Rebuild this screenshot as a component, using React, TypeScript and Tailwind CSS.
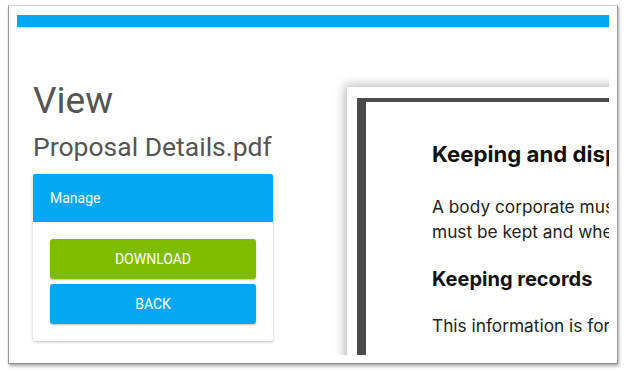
export default function App() {
  return (
    <div className="w-[626px] h-[375px] bg-white overflow-hidden">
      {/* screenshot frame */}
      <div className="ml-[8px] mt-[5px] w-[610px] h-[359px] bg-white border border-[#d6d6d6] border-l-[#9a9a9a] border-r-[#9a9a9a] border-b-[#8f8f8f] shadow-[1px_2px_3px_rgba(0,0,0,0.35)] pl-[8px] pr-[7px] pt-[9px] pb-[7px]">
        <div className="w-[592px] h-[340px] overflow-hidden flex flex-col">
          <div className="h-[12px] shrink-0 bg-[#06a7f2] shadow-[0_1px_2px_rgba(0,0,0,0.2)]" />

          <div className="flex items-start">
            {/* left column */}
            <div className="w-[240px] shrink-0 ml-[16px] pt-[52px] font-['Roboto',sans-serif]">
              <h1 className="text-[37px] leading-[43px] text-[#555555] font-normal">View</h1>
              <div className="mt-[9px] text-[26.5px] leading-[31px] text-[#555555]">Proposal Details.pdf</div>

              <div className="mt-[12px] bg-white rounded-[2px] shadow-[0_1px_3px_rgba(0,0,0,0.25)]">
                <div className="h-[48px] bg-[#06a7f2] rounded-t-[2px] px-[17px] text-white text-[14px] leading-[48px]">
                  Manage
                </div>
                <div className="p-[17px] flex flex-col gap-[5px]">
                  <button className="h-[40px] w-full rounded-[3px] bg-[#7fbc00] text-white text-[14px] shadow-[0_1px_2px_rgba(0,0,0,0.25)]">
                    DOWNLOAD
                  </button>
                  <button className="h-[40px] w-full rounded-[3px] bg-[#06a7f2] text-white text-[14px] shadow-[0_1px_2px_rgba(0,0,0,0.25)]">
                    BACK
                  </button>
                </div>
              </div>
            </div>

            {/* document viewer */}
            <div className="ml-[74px] mt-[60px] w-[300px] h-[400px] shrink-0 bg-white shadow-[-2px_-2px_10px_rgba(0,0,0,0.28)] pl-[10px] pt-[11px]">
              <div className="h-full border-l-[9px] border-t-[4px] border-[#4b4b4b] pl-[66px] pt-[38px] font-['Inter',sans-serif] text-[#111111] whitespace-nowrap">
                <h2 className="text-[22.2px] leading-[28px] font-bold">Keeping and displaying records</h2>
                <p className="mt-[26px] text-[17.3px] leading-[25px] text-[#222222]">
                  <span className="block">A body corporate must keep certain records</span>
                  <span className="block">must be kept and where they are kept.</span>
                </p>
                <h3 className="mt-[22px] text-[20px] leading-[26px] font-bold">Keeping records</h3>
                <p className="mt-[21px] text-[17.3px] leading-[25px] text-[#222222]">This information is for body corporates</p>
              </div>
            </div>
          </div>
        </div>
      </div>
    </div>
  )
}
